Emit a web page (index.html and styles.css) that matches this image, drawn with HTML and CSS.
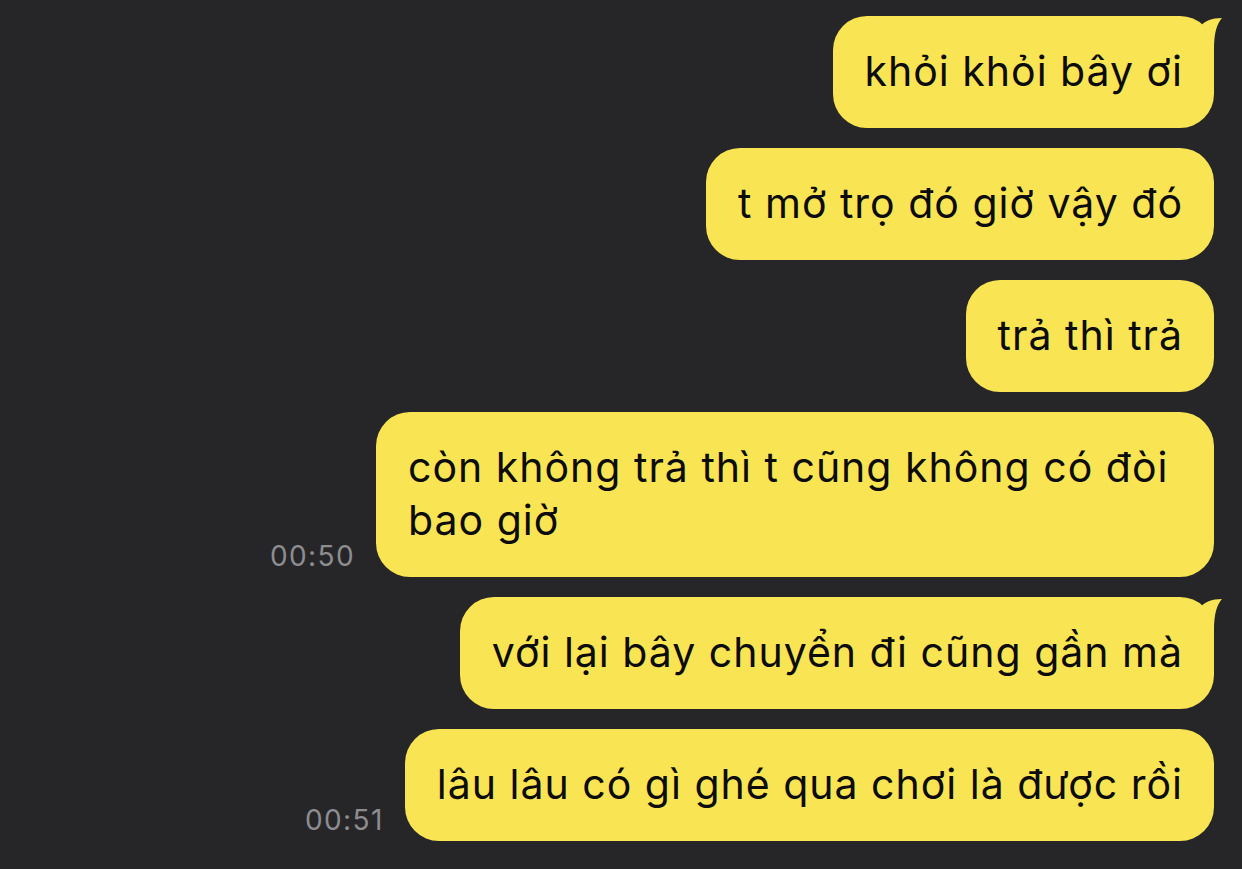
FILE: index.html
```html
<!DOCTYPE html>
<html lang="vi">

<head>
    <meta charset="UTF-8">
    <meta name="viewport" content="width=device-width, initial-scale=1.0">
    <title>Chat</title>
    <link rel="stylesheet" href="styles.css">
</head>

<body>

    <div class="chat">
        <div class="row">
            <div class="bubble">
                khỏi khỏi bây ơi
                <svg class="tail" width="30" height="50" viewBox="0 0 30 50"><path d="M6 11 C10 5 18 2 28 2 C23 8 20 16 20 34 L20 50 L0 50 Z" fill="#f9e553"/></svg>
            </div>
        </div>
        <div class="row">
            <div class="bubble">t mở trọ đó giờ vậy đó</div>
        </div>
        <div class="row">
            <div class="bubble">trả thì trả</div>
        </div>
        <div class="row">
            <span class="time">00:50</span>
            <div class="bubble">còn không trả thì t cũng không có đòi bao giờ</div>
        </div>
        <div class="row">
            <div class="bubble">
                với lại bây chuyển đi cũng gần mà
                <svg class="tail" width="30" height="50" viewBox="0 0 30 50"><path d="M6 11 C10 5 18 2 28 2 C23 8 20 16 20 34 L20 50 L0 50 Z" fill="#f9e553"/></svg>
            </div>
        </div>
        <div class="row">
            <span class="time">00:51</span>
            <div class="bubble">lâu lâu có gì ghé qua chơi là được rồi</div>
        </div>
    </div>

</body>

</html>
```

FILE: styles.css
```css
body {
    margin: 0;
    background-color: #262628;
    font-family: 'Inter', 'Noto Sans', sans-serif;
    min-height: 100vh;
}

.chat {
    display: flex;
    flex-direction: column;
    gap: 20px;
    padding: 16px 28px 0 0;
}

.row {
    display: flex;
    justify-content: flex-end;
    align-items: flex-end;
    gap: 21px;
}

.bubble {
    position: relative;
    background-color: #f9e553;
    color: #0c0c0c;
    font-size: 41px;
    letter-spacing: 1px;
    line-height: 53px;
    padding: 29px 31px 30px 32px;
    border-radius: 34px;
    max-width: 775px;
}

.tail {
    position: absolute;
    top: 0;
    right: -10px;
}

.time {
    color: #8d8d90;
    font-size: 28px;
    letter-spacing: 1.4px;
    padding-bottom: 4px;
}
```
